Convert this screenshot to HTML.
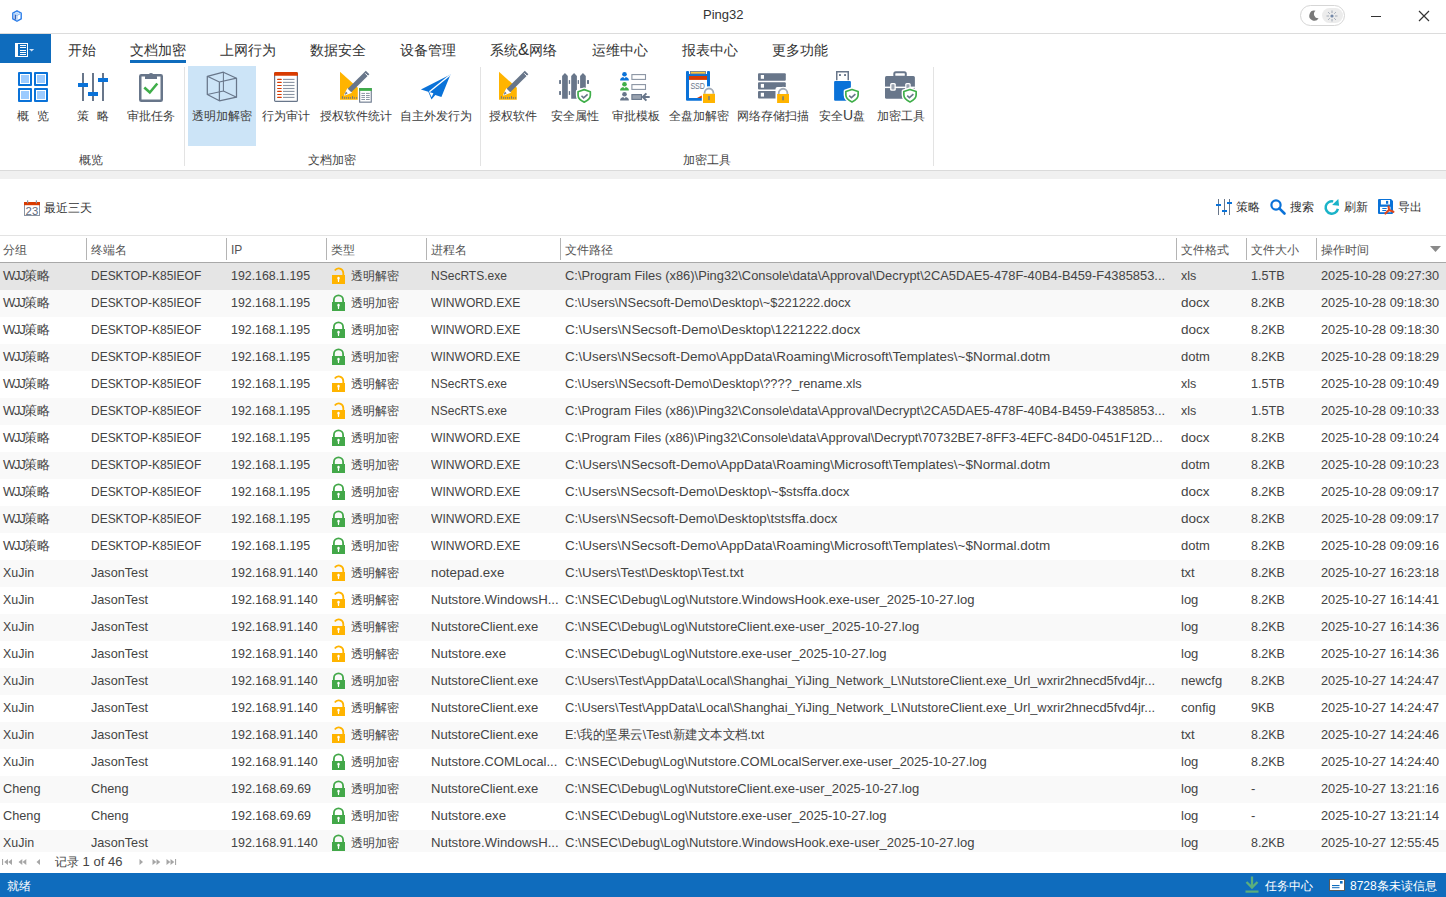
<!DOCTYPE html>
<html><head><meta charset="utf-8"><title>Ping32</title>
<style>
html,body{margin:0;padding:0;width:1446px;height:897px;overflow:hidden;background:#fff;font-family:"Liberation Sans", sans-serif;}
.t{position:absolute;white-space:nowrap;}
.r{position:absolute;}
svg.r{overflow:visible}
</style></head><body>
<div class="r" style="left:0px;top:0px;width:1446px;height:33px;background:#ffffff;"></div><div class="r" style="left:0px;top:33px;width:1446px;height:1px;background:#dcdcdc;"></div><svg class="r" style="left:12px;top:10px" width="10" height="12" viewBox="0 0 10 12"><path d="M5 0.8 L9.2 3.1 V8.9 L5 11.2 L0.8 8.9 V3.1 Z" fill="#fff" stroke="#2b7de9" stroke-width="1.4" stroke-linejoin="round"/><path d="M1 3.2 L5 5.4 L9 3.2" fill="none" stroke="#7fb6f5" stroke-width="1.1"/><path d="M3 2.3 L7 4.3 M2.6 4.3 L6.6 2.2" stroke="#a8cdf8" stroke-width="0.8"/><rect x="2.6" y="5" width="1.5" height="4.6" fill="#3a62b5"/><path d="M5 5.4 V11" stroke="#7fb6f5" stroke-width="0.9"/></svg><div class="t" style="left:703px;top:5px;font-size:13px;line-height:20px;color:#333;">Ping32</div><div class="r" style="left:1300px;top:5px;width:45px;height:21px;background:transparent;border:1px solid #d6d6d6;border-radius:11px;box-sizing:border-box"></div><div class="r" style="left:1322px;top:8px;width:21px;height:15px;background:#ececec;border-radius:8px"></div><svg class="r" style="left:1308px;top:10px" width="11" height="11" viewBox="0 0 11 11"><path d="M7.5 0.8 A5 5 0 1 0 10.6 8.2 A4.2 4.2 0 0 1 7.5 0.8 Z" fill="#7a7a7a"/></svg><svg class="r" style="left:1326px;top:10px" width="12" height="12" viewBox="0 0 12 12"><circle cx="6" cy="6" r="1.6" fill="#7388a8"/><g stroke="#9aa3b0" stroke-width="0.9"><path d="M6 0.5V3M6 9V11.5M0.5 6H3M9 6H11.5M2.1 2.1L3.8 3.8M8.2 8.2L9.9 9.9M2.1 9.9L3.8 8.2M8.2 3.8L9.9 2.1"/></g></svg><div class="r" style="left:1371px;top:16px;width:10px;height:1px;background:#333;"></div><svg class="r" style="left:1418px;top:10px" width="12" height="12" viewBox="0 0 12 12"><path d="M1 1L11 11M11 1L1 11" stroke="#333" stroke-width="1.2"/></svg><div class="r" style="left:0px;top:34px;width:51px;height:29px;background:#0f6cbd;"></div><svg class="r" style="left:15px;top:43px" width="22" height="14" viewBox="0 0 22 14"><rect x="0.5" y="0.5" width="12" height="13" fill="none" stroke="#fff" stroke-width="1"/><rect x="1" y="1" width="2" height="12" fill="#fff"/><g fill="#fff"><rect x="5" y="2" width="6" height="1"/><rect x="5" y="4" width="6" height="1"/><rect x="5" y="7" width="6" height="1"/><rect x="5" y="9" width="6" height="1"/><rect x="5" y="11" width="6" height="1"/></g><path d="M14 6 H19.2 L16.6 8.6 Z" fill="#cfe0f4"/></svg><div class="t" style="left:68px;top:40px;font-size:14px;line-height:20px;color:#333;">开始</div><div class="t" style="left:130px;top:40px;font-size:14px;line-height:20px;color:#333;">文档加密</div><div class="t" style="left:220px;top:40px;font-size:14px;line-height:20px;color:#333;">上网行为</div><div class="t" style="left:310px;top:40px;font-size:14px;line-height:20px;color:#333;">数据安全</div><div class="t" style="left:400px;top:40px;font-size:14px;line-height:20px;color:#333;">设备管理</div><div class="t" style="left:490px;top:40px;font-size:14px;line-height:20px;color:#333;">系统<span style="font-size:16.5px;line-height:14px">&amp;</span>网络</div><div class="t" style="left:592px;top:40px;font-size:14px;line-height:20px;color:#333;">运维中心</div><div class="t" style="left:682px;top:40px;font-size:14px;line-height:20px;color:#333;">报表中心</div><div class="t" style="left:772px;top:40px;font-size:14px;line-height:20px;color:#333;">更多功能</div><div class="r" style="left:130px;top:60px;width:56px;height:3px;background:#0f6cbd;"></div><div class="r" style="left:0px;top:170px;width:1446px;height:1px;background:#dadada;"></div><div class="r" style="left:0px;top:171px;width:1446px;height:8px;background:#f0f0f0;"></div><div class="r" style="left:184px;top:67px;width:1px;height:99px;background:#e3e3e3;"></div><div class="r" style="left:480px;top:67px;width:1px;height:99px;background:#e3e3e3;"></div><div class="r" style="left:933px;top:67px;width:1px;height:99px;background:#e3e3e3;"></div><div class="r" style="left:188px;top:66px;width:68px;height:80px;background:#cce4f7;"></div><svg class="r" style="left:18px;top:72px" width="30" height="30" viewBox="0 0 30 30"><rect x="0" y="0" width="14" height="14" rx="1" fill="#0a72d8"/><rect x="2" y="2" width="10" height="10" fill="#fff"/><rect x="3" y="3" width="8" height="8" fill="#9ccbff"/><rect x="0" y="16" width="14" height="14" rx="1" fill="#0a72d8"/><rect x="2" y="18" width="10" height="10" fill="#fff"/><rect x="3" y="19" width="8" height="8" fill="#9ccbff"/><rect x="16" y="0" width="14" height="14" rx="1" fill="#0a72d8"/><rect x="18" y="2" width="10" height="10" fill="#fff"/><rect x="19" y="3" width="8" height="8" fill="#9ccbff"/><rect x="16" y="16" width="14" height="14" rx="1" fill="#0a72d8"/><rect x="18" y="18" width="10" height="10" fill="#fff"/><rect x="19" y="19" width="8" height="8" fill="#9ccbff"/></svg><svg class="r" style="left:78px;top:72px" width="30" height="30" viewBox="0 0 30 30"><g fill="#68768a"><rect x="4" y="1" width="2" height="28"/><rect x="14" y="1" width="2" height="28"/><rect x="24" y="1" width="2" height="28"/></g><g fill="#0a72d8"><rect x="0" y="11" width="10" height="4"/><rect x="10" y="20" width="10" height="4"/><rect x="20" y="6" width="10" height="4"/></g></svg><svg class="r" style="left:139px;top:71px" width="25" height="31" viewBox="0 0 25 31"><rect x="1.25" y="4.25" width="21.5" height="25.5" rx="1" fill="#fff" stroke="#68768a" stroke-width="2.5"/><path d="M6 8 V5.5 Q6 4 7.5 4 H16.5 Q18 4 18 5.5 V8 Z" fill="#68768a"/><path d="M9.5 4.5 A2.5 2.5 0 0 1 14.5 4.5 Z" fill="#68768a"/><rect x="7" y="6.3" width="10" height="1.7" fill="#68768a"/><path d="M5.3 16.5 L10.8 21.5 L18.3 12.5" fill="none" stroke="#3fae49" stroke-width="2.6"/></svg><svg class="r" style="left:206px;top:71px" width="32" height="32" viewBox="0 0 32 32"><g fill="none" stroke="#68768a" stroke-width="1.25" stroke-linejoin="round"><path d="M1.3 5.3 L17.4 1.2 L30.5 7.2 L30.5 26.2 L13.4 29.8 L1.3 23.5 Z M1.3 5.3 L13.4 11 L30.5 7.2 M13.4 11 V29.8"/><path d="M17.4 1.2 V20.1 L1.3 23.5 M17.4 20.1 L30.5 26.2" stroke-width="1.05"/></g></svg><svg class="r" style="left:274px;top:72px" width="24" height="30" viewBox="0 0 24 30"><rect x="0.6" y="0.6" width="22.8" height="28.8" rx="1" fill="#fff" stroke="#68768a" stroke-width="1.2"/><path d="M0 3.8 V1.5 Q0 0 1.5 0 H22.5 Q24 0 24 1.5 V3.8 Z" fill="#d83b01"/><rect x="3.1" y="6.800000000000001" width="4.7" height="1.2" rx="0.6" fill="#d83b01"/><rect x="9" y="6.8500000000000005" width="11.5" height="1.1" fill="#8a94a3"/><rect x="3.1" y="9.8" width="4.7" height="1.2" rx="0.6" fill="#d83b01"/><rect x="9" y="9.85" width="11.5" height="1.1" fill="#8a94a3"/><rect x="3.1" y="12.9" width="4.7" height="1.2" rx="0.6" fill="#d83b01"/><rect x="9" y="12.95" width="11.5" height="1.1" fill="#8a94a3"/><rect x="3.1" y="15.9" width="4.7" height="1.2" rx="0.6" fill="#d83b01"/><rect x="9" y="15.95" width="11.5" height="1.1" fill="#8a94a3"/><rect x="3.1" y="18.799999999999997" width="4.7" height="1.2" rx="0.6" fill="#d83b01"/><rect x="9" y="18.849999999999998" width="11.5" height="1.1" fill="#8a94a3"/><rect x="3.1" y="21.9" width="4.7" height="1.2" rx="0.6" fill="#d83b01"/><rect x="9" y="21.95" width="11.5" height="1.1" fill="#8a94a3"/><rect x="3.1" y="24.799999999999997" width="4.7" height="1.2" rx="0.6" fill="#d83b01"/><rect x="9" y="24.849999999999998" width="11.5" height="1.1" fill="#8a94a3"/></svg><svg class="r" style="left:340px;top:71px" width="33" height="32" viewBox="0 0 33 32"><path d="M0 0.8 L17.8 16.7 V28.8 H0 Z" fill="#ffb400"/><rect x="1.9" y="25.2" width="1" height="2.5" fill="#68768a"/><rect x="4.0" y="26.2" width="1" height="1.5" fill="#68768a"/><rect x="5.9" y="26.2" width="1" height="1.5" fill="#68768a"/><rect x="8.0" y="26.2" width="1" height="1.5" fill="#68768a"/><rect x="9.9" y="26.2" width="1" height="1.5" fill="#68768a"/><rect x="12.0" y="25.2" width="1" height="2.5" fill="#68768a"/><rect x="13.9" y="26.2" width="1" height="1.5" fill="#68768a"/><rect x="16.1" y="26.2" width="1" height="1.5" fill="#68768a"/><path d="M7.73 17.83 L11.27 21.37 L4.6 23.9 Z" fill="#fff" stroke="#fff" stroke-width="1.2" stroke-linejoin="round"/><path d="M5.9 20.5 L7.6 22.2 L4.6 23.9 Z" fill="#68768a"/><path d="M27.6 1.4 L9.5 19.6" stroke="#68768a" stroke-width="5"/><path d="M25.2 2.3 L28.7 5.8" stroke="#fff" stroke-width="1"/><rect x="19.65" y="17.6" width="11.6" height="13.55" fill="#fff" stroke="#68768a" stroke-width="1.1"/><rect x="19.1" y="17.1" width="12.7" height="2.8" fill="#3fae49"/><rect x="21.4" y="21.9" width="3.6" height="1" fill="#8a94a3"/><rect x="26" y="21.9" width="3.7" height="1" fill="#8a94a3"/><rect x="21.4" y="24.0" width="3.6" height="1" fill="#8a94a3"/><rect x="26" y="24.0" width="3.7" height="1" fill="#8a94a3"/><rect x="21.4" y="25.9" width="3.6" height="1" fill="#8a94a3"/><rect x="26" y="25.9" width="3.7" height="1" fill="#8a94a3"/><rect x="21.4" y="28.0" width="3.6" height="1" fill="#8a94a3"/><rect x="26" y="28.0" width="3.7" height="1" fill="#8a94a3"/></svg><svg class="r" style="left:420px;top:73px" width="32" height="28" viewBox="0 0 32 28"><path d="M30.5 1.4 L0.9 16.4 L8.3 18.7 L11.5 26.6 L15.3 21.9 L21.4 24 Z" fill="#0a72d8"/><path d="M9.4 18.8 L29.8 2.3" stroke="#fff" stroke-width="1.4"/><path d="M9.2 19 L11.6 24.2 L13.4 20.2 Z" fill="#fff"/></svg><svg class="r" style="left:499px;top:71px" width="32" height="32" viewBox="0 0 32 32"><path d="M0 0.8 L17.8 16.7 V28.8 H0 Z" fill="#ffb400"/><rect x="1.9" y="25.2" width="1" height="2.5" fill="#68768a"/><rect x="4.0" y="26.2" width="1" height="1.5" fill="#68768a"/><rect x="5.9" y="26.2" width="1" height="1.5" fill="#68768a"/><rect x="8.0" y="26.2" width="1" height="1.5" fill="#68768a"/><rect x="9.9" y="26.2" width="1" height="1.5" fill="#68768a"/><rect x="12.0" y="25.2" width="1" height="2.5" fill="#68768a"/><rect x="13.9" y="26.2" width="1" height="1.5" fill="#68768a"/><rect x="16.1" y="26.2" width="1" height="1.5" fill="#68768a"/><path d="M7.73 17.83 L11.27 21.37 L4.6 23.9 Z" fill="#fff" stroke="#fff" stroke-width="1.2" stroke-linejoin="round"/><path d="M5.9 20.5 L7.6 22.2 L4.6 23.9 Z" fill="#68768a"/><path d="M27.6 1.4 L9.5 19.6" stroke="#68768a" stroke-width="5"/><path d="M25.2 2.3 L28.7 5.8" stroke="#fff" stroke-width="1"/></svg><svg class="r" style="left:559px;top:73px" width="33" height="31" viewBox="0 0 33 31"><g fill="#68768a"><path d="M3.1 3.1 L5.95 0.1 L8.8 3.1 V25.7 H3.1 Z"/><path d="M12.2 3.1 L15.049999999999999 0.1 L17.9 3.1 V25.7 H12.2 Z"/><path d="M21.1 3.1 L23.950000000000003 0.1 L26.8 3.1 V15.3 H21.1 Z"/><rect x="0.1" y="7.1" width="1.9" height="3.8"/><rect x="0.1" y="18.1" width="1.9" height="3.8"/><rect x="9.8" y="7.1" width="1.299999999999999" height="3.8"/><rect x="9.8" y="18.1" width="1.299999999999999" height="3.8"/><rect x="18.7" y="7.1" width="1.3000000000000007" height="3.8"/><rect x="18.7" y="18.1" width="1.3000000000000007" height="3.8"/><rect x="28" y="7.1" width="2" height="3.8"/></g><path d="M25.2 16.2 L31.799999999999997 18.4 V22.2 C31.799999999999997 26.0 28.4 28.2 25.2 29.6 C22.0 28.2 18.6 26.0 18.6 22.2 V18.4 Z" fill="#fff" stroke="#fff" stroke-width="3.5" stroke-linejoin="round"/><path d="M25.2 16.2 L31.799999999999997 18.4 V22.2 C31.799999999999997 26.0 28.4 28.2 25.2 29.6 C22.0 28.2 18.6 26.0 18.6 22.2 V18.4 Z" fill="#fff" stroke="#3fae49" stroke-width="1.8" stroke-linejoin="round" transform="translate(25.2 22.9) scale(0.93) translate(-25.2 -22.9)"/><path d="M22.45 22.799999999999997 L24.599999999999998 24.9 L28.599999999999998 21.299999999999997" fill="none" stroke="#68768a" stroke-width="1.6"/></svg><svg class="r" style="left:620px;top:72px" width="31" height="30" viewBox="0 0 31 30"><circle cx="4.5" cy="2.2" r="2.3" fill="#0a72d8"/><path d="M0.09999999999999964 8.6 C0.09999999999999964 5.6 2.5 5 4.5 5 C6.5 5 8.9 5.6 8.9 8.6 Z" fill="#0a72d8"/><path d="M3.3 5 L4.5 6.6 L5.7 5 Z" fill="#fff"/><circle cx="4.5" cy="12.2" r="2.3" fill="#3fae49"/><path d="M0.09999999999999964 18.6 C0.09999999999999964 15.6 2.5 15 4.5 15 C6.5 15 8.9 15.6 8.9 18.6 Z" fill="#3fae49"/><path d="M3.3 15 L4.5 16.6 L5.7 15 Z" fill="#fff"/><circle cx="4.5" cy="22.2" r="2.3" fill="#68768a"/><path d="M0.09999999999999964 28.6 C0.09999999999999964 25.6 2.5 25 4.5 25 C6.5 25 8.9 25.6 8.9 28.6 Z" fill="#68768a"/><path d="M3.3 25 L4.5 26.6 L5.7 25 Z" fill="#fff"/><g fill="none" stroke="#8a94a3" stroke-width="1.1"><rect x="11.9" y="2.6" width="13.6" height="4.8"/><rect x="11.9" y="12.6" width="13.6" height="4.8"/></g><rect x="11.9" y="22.6" width="9.6" height="4.8" fill="#9aa3b0" stroke="#68768a" stroke-width="1.1"/><path d="M29.7 25 H23 M26.4 21.4 L22.8 25 L26.4 28.6" fill="none" stroke="#68768a" stroke-width="2"/></svg><svg class="r" style="left:686px;top:71px" width="33" height="33" viewBox="0 0 33 33"><path d="M1 0 H2 Q3 0 3 1 V2.9 H21 V1 Q21 0 22 0 H23 Q24 0 24 1 V15.6 H21 V5 H3 V27 H15.8 V29.8 H1 Q0 29.8 0 28.8 V1 Q0 0 1 0 Z" fill="#0a72d8"/><rect x="4.5" y="0.4" width="15" height="2.5" fill="#ffc83d" stroke="#68768a" stroke-width="0.8"/><rect x="3" y="5" width="18" height="3.9" fill="#d83b01"/><text x="4.4" y="18" font-family="Liberation Sans" font-size="8.4" fill="#68768a" textLength="14.6" lengthAdjust="spacingAndGlyphs">SSD</text><path d="M11 27 L15.8 27 L15.8 24.5 Z" fill="#d83b01"/><path d="M18.6 22.8 V21.900000000000002 A4.4 4.4 0 0 1 27.4 21.900000000000002 V22.8" fill="none" stroke="#fff" stroke-width="4"/><path d="M18.6 22.8 V21.900000000000002 A4.4 4.4 0 0 1 27.4 21.900000000000002 V22.8" fill="none" stroke="#a3acb8" stroke-width="1.8"/><rect x="17" y="22.8" width="12" height="9.2" fill="#ffb400"/><rect x="22.3" y="25.1" width="1.4" height="4" fill="#68768a"/></svg><svg class="r" style="left:758px;top:73px" width="32" height="31" viewBox="0 0 32 31"><rect x="0" y="0.3" width="27.8" height="7.4" rx="1" fill="#68768a"/><rect x="2.8" y="2.0" width="3.2" height="3.8" fill="#fff"/><rect x="0" y="9.2" width="27.8" height="7.4" rx="1" fill="#68768a"/><rect x="2.8" y="10.899999999999999" width="3.2" height="3.8" fill="#fff"/><rect x="0" y="18.1" width="27.8" height="7.4" rx="1" fill="#68768a"/><rect x="2.8" y="19.8" width="3.2" height="3.8" fill="#fff"/><rect x="17.5" y="14" width="14" height="17" fill="#fff" rx="2"/><path d="M20.700000000000003 21.0 V20.1 A4.35 4.35 0 0 1 29.4 20.1 V21.0" fill="none" stroke="#fff" stroke-width="4"/><path d="M20.700000000000003 21.0 V20.1 A4.35 4.35 0 0 1 29.4 20.1 V21.0" fill="none" stroke="#a3acb8" stroke-width="1.8"/><rect x="19.1" y="21.0" width="11.9" height="9" fill="#ffb400"/><rect x="24.35" y="23.3" width="1.4" height="4" fill="#68768a"/></svg><svg class="r" style="left:834px;top:71px" width="26" height="33" viewBox="0 0 26 33"><path d="M2.75 9.3 V0.75 H14.25 V9.3" fill="none" stroke="#68768a" stroke-width="1.5"/><rect x="5" y="3.1" width="1.9" height="1.9" fill="#68768a"/><rect x="10.1" y="3.1" width="1.9" height="1.9" fill="#68768a"/><rect x="0.1" y="9.9" width="16.8" height="19.9" rx="1" fill="#0a72d8"/><path d="M18 18 L24.6 20.2 V24 C24.6 27.8 21.2 30 18 31.4 C14.8 30 11.4 27.8 11.4 24 V20.2 Z" fill="#fff" stroke="#fff" stroke-width="3.5" stroke-linejoin="round"/><path d="M18 18 L24.6 20.2 V24 C24.6 27.8 21.2 30 18 31.4 C14.8 30 11.4 27.8 11.4 24 V20.2 Z" fill="#fff" stroke="#3fae49" stroke-width="1.8" stroke-linejoin="round" transform="translate(18 24.7) scale(0.93) translate(-18 -24.7)"/><path d="M15.25 24.6 L17.4 26.7 L21.4 23.1" fill="none" stroke="#68768a" stroke-width="1.6"/></svg><svg class="r" style="left:885px;top:71px" width="33" height="33" viewBox="0 0 33 33"><rect x="9.3" y="1.2" width="11.5" height="4.6" rx="1.5" fill="none" stroke="#68768a" stroke-width="2"/><rect x="0" y="5" width="29.9" height="22.7" rx="1.5" fill="#68768a"/><rect x="0" y="15.6" width="29.9" height="1.5" fill="#fff"/><rect x="5.1" y="12" width="5.7" height="7.7" rx="1.5" fill="#fff"/><rect x="6.4" y="13.3" width="3.1" height="5.1" rx="0.6" fill="#9aa3b0"/><rect x="20.2" y="12" width="5.5" height="7.7" rx="1.5" fill="#fff"/><rect x="21.4" y="13.3" width="3.1" height="5.1" rx="0.6" fill="#9aa3b0"/><path d="M25 18 L31.6 20.2 V24 C31.6 27.8 28.2 30 25 31.4 C21.8 30 18.4 27.8 18.4 24 V20.2 Z" fill="#fff" stroke="#fff" stroke-width="3.5" stroke-linejoin="round"/><path d="M25 18 L31.6 20.2 V24 C31.6 27.8 28.2 30 25 31.4 C21.8 30 18.4 27.8 18.4 24 V20.2 Z" fill="#fff" stroke="#3fae49" stroke-width="1.8" stroke-linejoin="round" transform="translate(25 24.7) scale(0.93) translate(-25 -24.7)"/><path d="M22.25 24.6 L24.4 26.7 L28.4 23.1" fill="none" stroke="#68768a" stroke-width="1.6"/></svg><div class="t" style="left:-17.0px;width:100px;text-align:center;top:106px;font-size:12px;line-height:20px;color:#3c3c3c;">概<span style="margin-left:8px">览</span></div><div class="t" style="left:43.0px;width:100px;text-align:center;top:106px;font-size:12px;line-height:20px;color:#3c3c3c;">策<span style="margin-left:8px">略</span></div><div class="t" style="left:101.0px;width:100px;text-align:center;top:106px;font-size:12px;line-height:20px;color:#3c3c3c;">审批任务</div><div class="t" style="left:172.0px;width:100px;text-align:center;top:106px;font-size:12px;line-height:20px;color:#3c3c3c;">透明加解密</div><div class="t" style="left:236.0px;width:100px;text-align:center;top:106px;font-size:12px;line-height:20px;color:#3c3c3c;">行为审计</div><div class="t" style="left:306.0px;width:100px;text-align:center;top:106px;font-size:12px;line-height:20px;color:#3c3c3c;">授权软件统计</div><div class="t" style="left:386.0px;width:100px;text-align:center;top:106px;font-size:12px;line-height:20px;color:#3c3c3c;">自主外发行为</div><div class="t" style="left:463.0px;width:100px;text-align:center;top:106px;font-size:12px;line-height:20px;color:#3c3c3c;">授权软件</div><div class="t" style="left:525.0px;width:100px;text-align:center;top:106px;font-size:12px;line-height:20px;color:#3c3c3c;">安全属性</div><div class="t" style="left:585.5px;width:100px;text-align:center;top:106px;font-size:12px;line-height:20px;color:#3c3c3c;">审批模板</div><div class="t" style="left:649.0px;width:100px;text-align:center;top:106px;font-size:12px;line-height:20px;color:#3c3c3c;">全盘加解密</div><div class="t" style="left:722.7px;width:100px;text-align:center;top:106px;font-size:12px;line-height:20px;color:#3c3c3c;">网络存储扫描</div><div class="t" style="left:792.0px;width:100px;text-align:center;top:106px;font-size:12px;line-height:20px;color:#3c3c3c;">安全<span style="font-size:14px;line-height:12px">U</span>盘</div><div class="t" style="left:850.7px;width:100px;text-align:center;top:106px;font-size:12px;line-height:20px;color:#3c3c3c;">加密工具</div><div class="t" style="left:41.0px;width:100px;text-align:center;top:150px;font-size:12px;line-height:20px;color:#444;">概览</div><div class="t" style="left:282.0px;width:100px;text-align:center;top:150px;font-size:12px;line-height:20px;color:#444;">文档加密</div><div class="t" style="left:656.5px;width:100px;text-align:center;top:150px;font-size:12px;line-height:20px;color:#444;">加密工具</div><div class="r" style="left:0px;top:179px;width:1446px;height:56px;background:#ffffff;"></div><svg class="r" style="left:24px;top:200px" width="16" height="16" viewBox="0 0 16 16"><rect x="0.5" y="2.5" width="15" height="13" fill="#fff" stroke="#8a94a3" stroke-width="1"/><rect x="0" y="2" width="16" height="3.2" fill="#d83b01"/><rect x="3" y="0.3" width="1.2" height="3" fill="#8a94a3"/><rect x="11.8" y="0.3" width="1.2" height="3" fill="#8a94a3"/><text x="1.6" y="14.5" font-family="Liberation Sans" font-size="10.5" fill="#5f6b7d" textLength="12.6" lengthAdjust="spacingAndGlyphs">23</text></svg><div class="t" style="left:44px;top:198px;font-size:12px;line-height:20px;color:#333;">最近三天</div><svg class="r" style="left:1216px;top:199px" width="16" height="16" viewBox="0 0 16 16"><g fill="#68768a"><rect x="2" y="0" width="1" height="16"/><rect x="8" y="0" width="1" height="16"/><rect x="13" y="0" width="1" height="16"/></g><g fill="#0a72d8"><rect x="0" y="5" width="5" height="2"/><rect x="6" y="11" width="5" height="2"/><rect x="11" y="3" width="5" height="2"/></g></svg><div class="t" style="left:1236px;top:197px;font-size:12px;line-height:20px;color:#333;">策略</div><svg class="r" style="left:1270px;top:199px" width="16" height="16" viewBox="0 0 16 16"><circle cx="6" cy="6" r="4.6" fill="none" stroke="#0a72d8" stroke-width="2.2"/><path d="M9.3 9.3 L14.5 14.5" stroke="#0a72d8" stroke-width="2.6" stroke-linecap="round"/></svg><div class="t" style="left:1290px;top:197px;font-size:12px;line-height:20px;color:#333;">搜索</div><svg class="r" style="left:1324px;top:199px" width="16" height="16" viewBox="0 0 16 16"><path d="M13.9 9.9 A6.2 6.2 0 1 1 9.2 2.4" fill="none" stroke="#1ab3c8" stroke-width="2.5"/><path d="M8.1 6 L14.3 -0.1 L15.1 6.8 Z" fill="#1ab3c8"/></svg><div class="t" style="left:1344px;top:197px;font-size:12px;line-height:20px;color:#333;">刷新</div><svg class="r" style="left:1378px;top:199px" width="16" height="16" viewBox="0 0 16 16"><path d="M0 1 Q0 0 1 0 H13 L15 2 V14 Q15 15 14 15 H1 Q0 15 0 14 Z" fill="#0a72d8"/><rect x="2.9" y="1" width="9.1" height="4.5" fill="#fff"/><rect x="2" y="7.8" width="10.5" height="5.4" fill="#fff"/><rect x="12" y="11" width="1" height="2.2" fill="#fff"/><rect x="8" y="1.9" width="2.2" height="2.9" fill="#0a72d8"/><rect x="4.3" y="9" width="4.4" height="1" fill="#0a72d8"/><rect x="4.3" y="11" width="4" height="1" fill="#0a72d8"/><path d="M10.6 7.6 L11 11 L7.4 14.6 M11 11 L15.4 12.8" fill="none" stroke="#e0461a" stroke-width="2.1" stroke-linecap="round" stroke-linejoin="round"/></svg><div class="t" style="left:1398px;top:197px;font-size:12px;line-height:20px;color:#333;">导出</div><div class="r" style="left:0px;top:235px;width:1446px;height:1px;background:#e3e3e3;"></div><div class="r" style="left:0px;top:236px;width:1446px;height:26px;background:#ffffff;"></div><div class="r" style="left:0px;top:262px;width:1446px;height:1px;background:#a8a8a8;"></div><div class="t" style="left:3px;top:240px;font-size:12px;line-height:20px;color:#555;">分组</div><div class="r" style="left:86px;top:238px;width:1px;height:22px;background:#b4b4b4;"></div><div class="t" style="left:91px;top:240px;font-size:12px;line-height:20px;color:#555;">终端名</div><div class="r" style="left:226px;top:238px;width:1px;height:22px;background:#b4b4b4;"></div><div class="t" style="left:231px;top:240px;font-size:12px;line-height:20px;color:#555;">IP</div><div class="r" style="left:326px;top:238px;width:1px;height:22px;background:#b4b4b4;"></div><div class="t" style="left:331px;top:240px;font-size:12px;line-height:20px;color:#555;">类型</div><div class="r" style="left:426px;top:238px;width:1px;height:22px;background:#b4b4b4;"></div><div class="t" style="left:431px;top:240px;font-size:12px;line-height:20px;color:#555;">进程名</div><div class="r" style="left:560px;top:238px;width:1px;height:22px;background:#b4b4b4;"></div><div class="t" style="left:565px;top:240px;font-size:12px;line-height:20px;color:#555;">文件路径</div><div class="r" style="left:1176px;top:238px;width:1px;height:22px;background:#b4b4b4;"></div><div class="t" style="left:1181px;top:240px;font-size:12px;line-height:20px;color:#555;">文件格式</div><div class="r" style="left:1246px;top:238px;width:1px;height:22px;background:#b4b4b4;"></div><div class="t" style="left:1251px;top:240px;font-size:12px;line-height:20px;color:#555;">文件大小</div><div class="r" style="left:1316px;top:238px;width:1px;height:22px;background:#b4b4b4;"></div><div class="t" style="left:1321px;top:240px;font-size:12px;line-height:20px;color:#555;">操作时间</div><svg class="r" style="left:1430px;top:246px" width="11" height="6" viewBox="0 0 11 6"><path d="M0 0 H11 L5.5 6 Z" fill="#8a8a8a"/></svg><div class="r" style="left:0;top:263px;width:1446px;height:589px;overflow:hidden"><div class="r" style="left:0px;top:0px;width:1446px;height:27px;background:#e5e5e5;"></div><div class="t" style="left:3px;top:3px;font-size:13px;line-height:20px;color:#444444;"><span style="letter-spacing:-1.3px">WJJ</span>策略</div><div class="t" style="left:91px;top:3px;font-size:13px;line-height:20px;color:#444444;transform:scaleX(0.921);transform-origin:0 0;">DESKTOP-K85IEOF</div><div class="t" style="left:231px;top:3px;font-size:13px;line-height:20px;color:#444444;transform:scaleX(0.951);transform-origin:0 0;">192.168.1.195</div><svg class="r" style="left:332px;top:5px" width="13" height="16" viewBox="0 0 13 16"><path d="M2.8 2.56 A4.6 4.6 0 0 1 11.3 5 V7.5" fill="none" stroke="#ffb400" stroke-width="1.8"/><rect x="0" y="7" width="13" height="9" fill="#ffb400"/><circle cx="6.5" cy="9.9" r="1.2" fill="#fff"/><path d="M5.6 10 H7.4 L7 14 H6 Z" fill="#fff"/></svg><div class="t" style="left:351px;top:3px;font-size:12px;line-height:20px;color:#444444;">透明解密</div><div class="t" style="left:431px;top:3px;font-size:13px;line-height:20px;color:#444444;transform:scaleX(0.925);transform-origin:0 0;">NSecRTS.exe</div><div class="t" style="left:565px;top:3px;font-size:13px;line-height:20px;color:#444444;transform:scaleX(0.991);transform-origin:0 0;">C:\Program Files (x86)\Ping32\Console\data\Approval\Decrypt\2CA5DAE5-478F-40B4-B459-F4385853...</div><div class="t" style="left:1181px;top:3px;font-size:13px;line-height:20px;color:#444444;transform:scaleX(0.96);transform-origin:0 0;">xls</div><div class="t" style="left:1251px;top:3px;font-size:13px;line-height:20px;color:#444444;transform:scaleX(0.972);transform-origin:0 0;">1.5TB</div><div class="t" style="left:1321px;top:3px;font-size:13px;line-height:20px;color:#444444;transform:scaleX(0.979);transform-origin:0 0;">2025-10-28 09:27:30</div><div class="r" style="left:0px;top:27px;width:1446px;height:27px;background:#f9f9f9;"></div><div class="t" style="left:3px;top:30px;font-size:13px;line-height:20px;color:#444444;"><span style="letter-spacing:-1.3px">WJJ</span>策略</div><div class="t" style="left:91px;top:30px;font-size:13px;line-height:20px;color:#444444;transform:scaleX(0.921);transform-origin:0 0;">DESKTOP-K85IEOF</div><div class="t" style="left:231px;top:30px;font-size:13px;line-height:20px;color:#444444;transform:scaleX(0.951);transform-origin:0 0;">192.168.1.195</div><svg class="r" style="left:332px;top:32px" width="13" height="16" viewBox="0 0 13 16"><path d="M1.9 7.5 V5 A4.6 4.6 0 0 1 11.1 5 V7.5" fill="none" stroke="#43a849" stroke-width="1.8"/><rect x="0" y="7" width="13" height="9" fill="#43a849"/><circle cx="6.5" cy="9.9" r="1.2" fill="#fff"/><path d="M5.6 10 H7.4 L7 14 H6 Z" fill="#fff"/></svg><div class="t" style="left:351px;top:30px;font-size:12px;line-height:20px;color:#444444;">透明加密</div><div class="t" style="left:431px;top:30px;font-size:13px;line-height:20px;color:#444444;transform:scaleX(0.931);transform-origin:0 0;">WINWORD.EXE</div><div class="t" style="left:565px;top:30px;font-size:13px;line-height:20px;color:#444444;transform:scaleX(0.985);transform-origin:0 0;">C:\Users\NSecsoft-Demo\Desktop\~$221222.docx</div><div class="t" style="left:1181px;top:30px;font-size:13px;line-height:20px;color:#444444;transform:scaleX(1.04);transform-origin:0 0;">docx</div><div class="t" style="left:1251px;top:30px;font-size:13px;line-height:20px;color:#444444;transform:scaleX(0.956);transform-origin:0 0;">8.2KB</div><div class="t" style="left:1321px;top:30px;font-size:13px;line-height:20px;color:#444444;transform:scaleX(0.979);transform-origin:0 0;">2025-10-28 09:18:30</div><div class="r" style="left:0px;top:54px;width:1446px;height:27px;background:#ffffff;"></div><div class="t" style="left:3px;top:57px;font-size:13px;line-height:20px;color:#444444;"><span style="letter-spacing:-1.3px">WJJ</span>策略</div><div class="t" style="left:91px;top:57px;font-size:13px;line-height:20px;color:#444444;transform:scaleX(0.921);transform-origin:0 0;">DESKTOP-K85IEOF</div><div class="t" style="left:231px;top:57px;font-size:13px;line-height:20px;color:#444444;transform:scaleX(0.951);transform-origin:0 0;">192.168.1.195</div><svg class="r" style="left:332px;top:59px" width="13" height="16" viewBox="0 0 13 16"><path d="M1.9 7.5 V5 A4.6 4.6 0 0 1 11.1 5 V7.5" fill="none" stroke="#43a849" stroke-width="1.8"/><rect x="0" y="7" width="13" height="9" fill="#43a849"/><circle cx="6.5" cy="9.9" r="1.2" fill="#fff"/><path d="M5.6 10 H7.4 L7 14 H6 Z" fill="#fff"/></svg><div class="t" style="left:351px;top:57px;font-size:12px;line-height:20px;color:#444444;">透明加密</div><div class="t" style="left:431px;top:57px;font-size:13px;line-height:20px;color:#444444;transform:scaleX(0.931);transform-origin:0 0;">WINWORD.EXE</div><div class="t" style="left:565px;top:57px;font-size:13px;line-height:20px;color:#444444;transform:scaleX(1.045);transform-origin:0 0;">C:\Users\NSecsoft-Demo\Desktop\1221222.docx</div><div class="t" style="left:1181px;top:57px;font-size:13px;line-height:20px;color:#444444;transform:scaleX(1.04);transform-origin:0 0;">docx</div><div class="t" style="left:1251px;top:57px;font-size:13px;line-height:20px;color:#444444;transform:scaleX(0.956);transform-origin:0 0;">8.2KB</div><div class="t" style="left:1321px;top:57px;font-size:13px;line-height:20px;color:#444444;transform:scaleX(0.979);transform-origin:0 0;">2025-10-28 09:18:30</div><div class="r" style="left:0px;top:81px;width:1446px;height:27px;background:#f9f9f9;"></div><div class="t" style="left:3px;top:84px;font-size:13px;line-height:20px;color:#444444;"><span style="letter-spacing:-1.3px">WJJ</span>策略</div><div class="t" style="left:91px;top:84px;font-size:13px;line-height:20px;color:#444444;transform:scaleX(0.921);transform-origin:0 0;">DESKTOP-K85IEOF</div><div class="t" style="left:231px;top:84px;font-size:13px;line-height:20px;color:#444444;transform:scaleX(0.951);transform-origin:0 0;">192.168.1.195</div><svg class="r" style="left:332px;top:86px" width="13" height="16" viewBox="0 0 13 16"><path d="M1.9 7.5 V5 A4.6 4.6 0 0 1 11.1 5 V7.5" fill="none" stroke="#43a849" stroke-width="1.8"/><rect x="0" y="7" width="13" height="9" fill="#43a849"/><circle cx="6.5" cy="9.9" r="1.2" fill="#fff"/><path d="M5.6 10 H7.4 L7 14 H6 Z" fill="#fff"/></svg><div class="t" style="left:351px;top:84px;font-size:12px;line-height:20px;color:#444444;">透明加密</div><div class="t" style="left:431px;top:84px;font-size:13px;line-height:20px;color:#444444;transform:scaleX(0.931);transform-origin:0 0;">WINWORD.EXE</div><div class="t" style="left:565px;top:84px;font-size:13px;line-height:20px;color:#444444;transform:scaleX(1.037);transform-origin:0 0;">C:\Users\NSecsoft-Demo\AppData\Roaming\Microsoft\Templates\~$Normal.dotm</div><div class="t" style="left:1181px;top:84px;font-size:13px;line-height:20px;color:#444444;">dotm</div><div class="t" style="left:1251px;top:84px;font-size:13px;line-height:20px;color:#444444;transform:scaleX(0.956);transform-origin:0 0;">8.2KB</div><div class="t" style="left:1321px;top:84px;font-size:13px;line-height:20px;color:#444444;transform:scaleX(0.979);transform-origin:0 0;">2025-10-28 09:18:29</div><div class="r" style="left:0px;top:108px;width:1446px;height:27px;background:#ffffff;"></div><div class="t" style="left:3px;top:111px;font-size:13px;line-height:20px;color:#444444;"><span style="letter-spacing:-1.3px">WJJ</span>策略</div><div class="t" style="left:91px;top:111px;font-size:13px;line-height:20px;color:#444444;transform:scaleX(0.921);transform-origin:0 0;">DESKTOP-K85IEOF</div><div class="t" style="left:231px;top:111px;font-size:13px;line-height:20px;color:#444444;transform:scaleX(0.951);transform-origin:0 0;">192.168.1.195</div><svg class="r" style="left:332px;top:113px" width="13" height="16" viewBox="0 0 13 16"><path d="M2.8 2.56 A4.6 4.6 0 0 1 11.3 5 V7.5" fill="none" stroke="#ffb400" stroke-width="1.8"/><rect x="0" y="7" width="13" height="9" fill="#ffb400"/><circle cx="6.5" cy="9.9" r="1.2" fill="#fff"/><path d="M5.6 10 H7.4 L7 14 H6 Z" fill="#fff"/></svg><div class="t" style="left:351px;top:111px;font-size:12px;line-height:20px;color:#444444;">透明解密</div><div class="t" style="left:431px;top:111px;font-size:13px;line-height:20px;color:#444444;transform:scaleX(0.925);transform-origin:0 0;">NSecRTS.exe</div><div class="t" style="left:565px;top:111px;font-size:13px;line-height:20px;color:#444444;transform:scaleX(0.987);transform-origin:0 0;">C:\Users\NSecsoft-Demo\Desktop\????_rename.xls</div><div class="t" style="left:1181px;top:111px;font-size:13px;line-height:20px;color:#444444;transform:scaleX(0.96);transform-origin:0 0;">xls</div><div class="t" style="left:1251px;top:111px;font-size:13px;line-height:20px;color:#444444;transform:scaleX(0.972);transform-origin:0 0;">1.5TB</div><div class="t" style="left:1321px;top:111px;font-size:13px;line-height:20px;color:#444444;transform:scaleX(0.979);transform-origin:0 0;">2025-10-28 09:10:49</div><div class="r" style="left:0px;top:135px;width:1446px;height:27px;background:#f9f9f9;"></div><div class="t" style="left:3px;top:138px;font-size:13px;line-height:20px;color:#444444;"><span style="letter-spacing:-1.3px">WJJ</span>策略</div><div class="t" style="left:91px;top:138px;font-size:13px;line-height:20px;color:#444444;transform:scaleX(0.921);transform-origin:0 0;">DESKTOP-K85IEOF</div><div class="t" style="left:231px;top:138px;font-size:13px;line-height:20px;color:#444444;transform:scaleX(0.951);transform-origin:0 0;">192.168.1.195</div><svg class="r" style="left:332px;top:140px" width="13" height="16" viewBox="0 0 13 16"><path d="M2.8 2.56 A4.6 4.6 0 0 1 11.3 5 V7.5" fill="none" stroke="#ffb400" stroke-width="1.8"/><rect x="0" y="7" width="13" height="9" fill="#ffb400"/><circle cx="6.5" cy="9.9" r="1.2" fill="#fff"/><path d="M5.6 10 H7.4 L7 14 H6 Z" fill="#fff"/></svg><div class="t" style="left:351px;top:138px;font-size:12px;line-height:20px;color:#444444;">透明解密</div><div class="t" style="left:431px;top:138px;font-size:13px;line-height:20px;color:#444444;transform:scaleX(0.925);transform-origin:0 0;">NSecRTS.exe</div><div class="t" style="left:565px;top:138px;font-size:13px;line-height:20px;color:#444444;transform:scaleX(0.991);transform-origin:0 0;">C:\Program Files (x86)\Ping32\Console\data\Approval\Decrypt\2CA5DAE5-478F-40B4-B459-F4385853...</div><div class="t" style="left:1181px;top:138px;font-size:13px;line-height:20px;color:#444444;transform:scaleX(0.96);transform-origin:0 0;">xls</div><div class="t" style="left:1251px;top:138px;font-size:13px;line-height:20px;color:#444444;transform:scaleX(0.972);transform-origin:0 0;">1.5TB</div><div class="t" style="left:1321px;top:138px;font-size:13px;line-height:20px;color:#444444;transform:scaleX(0.979);transform-origin:0 0;">2025-10-28 09:10:33</div><div class="r" style="left:0px;top:162px;width:1446px;height:27px;background:#ffffff;"></div><div class="t" style="left:3px;top:165px;font-size:13px;line-height:20px;color:#444444;"><span style="letter-spacing:-1.3px">WJJ</span>策略</div><div class="t" style="left:91px;top:165px;font-size:13px;line-height:20px;color:#444444;transform:scaleX(0.921);transform-origin:0 0;">DESKTOP-K85IEOF</div><div class="t" style="left:231px;top:165px;font-size:13px;line-height:20px;color:#444444;transform:scaleX(0.951);transform-origin:0 0;">192.168.1.195</div><svg class="r" style="left:332px;top:167px" width="13" height="16" viewBox="0 0 13 16"><path d="M1.9 7.5 V5 A4.6 4.6 0 0 1 11.1 5 V7.5" fill="none" stroke="#43a849" stroke-width="1.8"/><rect x="0" y="7" width="13" height="9" fill="#43a849"/><circle cx="6.5" cy="9.9" r="1.2" fill="#fff"/><path d="M5.6 10 H7.4 L7 14 H6 Z" fill="#fff"/></svg><div class="t" style="left:351px;top:165px;font-size:12px;line-height:20px;color:#444444;">透明加密</div><div class="t" style="left:431px;top:165px;font-size:13px;line-height:20px;color:#444444;transform:scaleX(0.931);transform-origin:0 0;">WINWORD.EXE</div><div class="t" style="left:565px;top:165px;font-size:13px;line-height:20px;color:#444444;transform:scaleX(0.986);transform-origin:0 0;">C:\Program Files (x86)\Ping32\Console\data\Approval\Decrypt\70732BE7-8FF3-4EFC-84D0-0451F12D...</div><div class="t" style="left:1181px;top:165px;font-size:13px;line-height:20px;color:#444444;transform:scaleX(1.04);transform-origin:0 0;">docx</div><div class="t" style="left:1251px;top:165px;font-size:13px;line-height:20px;color:#444444;transform:scaleX(0.956);transform-origin:0 0;">8.2KB</div><div class="t" style="left:1321px;top:165px;font-size:13px;line-height:20px;color:#444444;transform:scaleX(0.979);transform-origin:0 0;">2025-10-28 09:10:24</div><div class="r" style="left:0px;top:189px;width:1446px;height:27px;background:#f9f9f9;"></div><div class="t" style="left:3px;top:192px;font-size:13px;line-height:20px;color:#444444;"><span style="letter-spacing:-1.3px">WJJ</span>策略</div><div class="t" style="left:91px;top:192px;font-size:13px;line-height:20px;color:#444444;transform:scaleX(0.921);transform-origin:0 0;">DESKTOP-K85IEOF</div><div class="t" style="left:231px;top:192px;font-size:13px;line-height:20px;color:#444444;transform:scaleX(0.951);transform-origin:0 0;">192.168.1.195</div><svg class="r" style="left:332px;top:194px" width="13" height="16" viewBox="0 0 13 16"><path d="M1.9 7.5 V5 A4.6 4.6 0 0 1 11.1 5 V7.5" fill="none" stroke="#43a849" stroke-width="1.8"/><rect x="0" y="7" width="13" height="9" fill="#43a849"/><circle cx="6.5" cy="9.9" r="1.2" fill="#fff"/><path d="M5.6 10 H7.4 L7 14 H6 Z" fill="#fff"/></svg><div class="t" style="left:351px;top:192px;font-size:12px;line-height:20px;color:#444444;">透明加密</div><div class="t" style="left:431px;top:192px;font-size:13px;line-height:20px;color:#444444;transform:scaleX(0.931);transform-origin:0 0;">WINWORD.EXE</div><div class="t" style="left:565px;top:192px;font-size:13px;line-height:20px;color:#444444;transform:scaleX(1.037);transform-origin:0 0;">C:\Users\NSecsoft-Demo\AppData\Roaming\Microsoft\Templates\~$Normal.dotm</div><div class="t" style="left:1181px;top:192px;font-size:13px;line-height:20px;color:#444444;">dotm</div><div class="t" style="left:1251px;top:192px;font-size:13px;line-height:20px;color:#444444;transform:scaleX(0.956);transform-origin:0 0;">8.2KB</div><div class="t" style="left:1321px;top:192px;font-size:13px;line-height:20px;color:#444444;transform:scaleX(0.979);transform-origin:0 0;">2025-10-28 09:10:23</div><div class="r" style="left:0px;top:216px;width:1446px;height:27px;background:#ffffff;"></div><div class="t" style="left:3px;top:219px;font-size:13px;line-height:20px;color:#444444;"><span style="letter-spacing:-1.3px">WJJ</span>策略</div><div class="t" style="left:91px;top:219px;font-size:13px;line-height:20px;color:#444444;transform:scaleX(0.921);transform-origin:0 0;">DESKTOP-K85IEOF</div><div class="t" style="left:231px;top:219px;font-size:13px;line-height:20px;color:#444444;transform:scaleX(0.951);transform-origin:0 0;">192.168.1.195</div><svg class="r" style="left:332px;top:221px" width="13" height="16" viewBox="0 0 13 16"><path d="M1.9 7.5 V5 A4.6 4.6 0 0 1 11.1 5 V7.5" fill="none" stroke="#43a849" stroke-width="1.8"/><rect x="0" y="7" width="13" height="9" fill="#43a849"/><circle cx="6.5" cy="9.9" r="1.2" fill="#fff"/><path d="M5.6 10 H7.4 L7 14 H6 Z" fill="#fff"/></svg><div class="t" style="left:351px;top:219px;font-size:12px;line-height:20px;color:#444444;">透明加密</div><div class="t" style="left:431px;top:219px;font-size:13px;line-height:20px;color:#444444;transform:scaleX(0.931);transform-origin:0 0;">WINWORD.EXE</div><div class="t" style="left:565px;top:219px;font-size:13px;line-height:20px;color:#444444;transform:scaleX(1.025);transform-origin:0 0;">C:\Users\NSecsoft-Demo\Desktop\~$stsffa.docx</div><div class="t" style="left:1181px;top:219px;font-size:13px;line-height:20px;color:#444444;transform:scaleX(1.04);transform-origin:0 0;">docx</div><div class="t" style="left:1251px;top:219px;font-size:13px;line-height:20px;color:#444444;transform:scaleX(0.956);transform-origin:0 0;">8.2KB</div><div class="t" style="left:1321px;top:219px;font-size:13px;line-height:20px;color:#444444;transform:scaleX(0.979);transform-origin:0 0;">2025-10-28 09:09:17</div><div class="r" style="left:0px;top:243px;width:1446px;height:27px;background:#f9f9f9;"></div><div class="t" style="left:3px;top:246px;font-size:13px;line-height:20px;color:#444444;"><span style="letter-spacing:-1.3px">WJJ</span>策略</div><div class="t" style="left:91px;top:246px;font-size:13px;line-height:20px;color:#444444;transform:scaleX(0.921);transform-origin:0 0;">DESKTOP-K85IEOF</div><div class="t" style="left:231px;top:246px;font-size:13px;line-height:20px;color:#444444;transform:scaleX(0.951);transform-origin:0 0;">192.168.1.195</div><svg class="r" style="left:332px;top:248px" width="13" height="16" viewBox="0 0 13 16"><path d="M1.9 7.5 V5 A4.6 4.6 0 0 1 11.1 5 V7.5" fill="none" stroke="#43a849" stroke-width="1.8"/><rect x="0" y="7" width="13" height="9" fill="#43a849"/><circle cx="6.5" cy="9.9" r="1.2" fill="#fff"/><path d="M5.6 10 H7.4 L7 14 H6 Z" fill="#fff"/></svg><div class="t" style="left:351px;top:246px;font-size:12px;line-height:20px;color:#444444;">透明加密</div><div class="t" style="left:431px;top:246px;font-size:13px;line-height:20px;color:#444444;transform:scaleX(0.931);transform-origin:0 0;">WINWORD.EXE</div><div class="t" style="left:565px;top:246px;font-size:13px;line-height:20px;color:#444444;transform:scaleX(1.023);transform-origin:0 0;">C:\Users\NSecsoft-Demo\Desktop\tstsffa.docx</div><div class="t" style="left:1181px;top:246px;font-size:13px;line-height:20px;color:#444444;transform:scaleX(1.04);transform-origin:0 0;">docx</div><div class="t" style="left:1251px;top:246px;font-size:13px;line-height:20px;color:#444444;transform:scaleX(0.956);transform-origin:0 0;">8.2KB</div><div class="t" style="left:1321px;top:246px;font-size:13px;line-height:20px;color:#444444;transform:scaleX(0.979);transform-origin:0 0;">2025-10-28 09:09:17</div><div class="r" style="left:0px;top:270px;width:1446px;height:27px;background:#ffffff;"></div><div class="t" style="left:3px;top:273px;font-size:13px;line-height:20px;color:#444444;"><span style="letter-spacing:-1.3px">WJJ</span>策略</div><div class="t" style="left:91px;top:273px;font-size:13px;line-height:20px;color:#444444;transform:scaleX(0.921);transform-origin:0 0;">DESKTOP-K85IEOF</div><div class="t" style="left:231px;top:273px;font-size:13px;line-height:20px;color:#444444;transform:scaleX(0.951);transform-origin:0 0;">192.168.1.195</div><svg class="r" style="left:332px;top:275px" width="13" height="16" viewBox="0 0 13 16"><path d="M1.9 7.5 V5 A4.6 4.6 0 0 1 11.1 5 V7.5" fill="none" stroke="#43a849" stroke-width="1.8"/><rect x="0" y="7" width="13" height="9" fill="#43a849"/><circle cx="6.5" cy="9.9" r="1.2" fill="#fff"/><path d="M5.6 10 H7.4 L7 14 H6 Z" fill="#fff"/></svg><div class="t" style="left:351px;top:273px;font-size:12px;line-height:20px;color:#444444;">透明加密</div><div class="t" style="left:431px;top:273px;font-size:13px;line-height:20px;color:#444444;transform:scaleX(0.931);transform-origin:0 0;">WINWORD.EXE</div><div class="t" style="left:565px;top:273px;font-size:13px;line-height:20px;color:#444444;transform:scaleX(1.037);transform-origin:0 0;">C:\Users\NSecsoft-Demo\AppData\Roaming\Microsoft\Templates\~$Normal.dotm</div><div class="t" style="left:1181px;top:273px;font-size:13px;line-height:20px;color:#444444;">dotm</div><div class="t" style="left:1251px;top:273px;font-size:13px;line-height:20px;color:#444444;transform:scaleX(0.956);transform-origin:0 0;">8.2KB</div><div class="t" style="left:1321px;top:273px;font-size:13px;line-height:20px;color:#444444;transform:scaleX(0.979);transform-origin:0 0;">2025-10-28 09:09:16</div><div class="r" style="left:0px;top:297px;width:1446px;height:27px;background:#f9f9f9;"></div><div class="t" style="left:3px;top:300px;font-size:13px;line-height:20px;color:#444444;transform:scaleX(0.955);transform-origin:0 0;">XuJin</div><div class="t" style="left:91px;top:300px;font-size:13px;line-height:20px;color:#444444;transform:scaleX(0.974);transform-origin:0 0;">JasonTest</div><div class="t" style="left:231px;top:300px;font-size:13px;line-height:20px;color:#444444;transform:scaleX(0.96);transform-origin:0 0;">192.168.91.140</div><svg class="r" style="left:332px;top:302px" width="13" height="16" viewBox="0 0 13 16"><path d="M2.8 2.56 A4.6 4.6 0 0 1 11.3 5 V7.5" fill="none" stroke="#ffb400" stroke-width="1.8"/><rect x="0" y="7" width="13" height="9" fill="#ffb400"/><circle cx="6.5" cy="9.9" r="1.2" fill="#fff"/><path d="M5.6 10 H7.4 L7 14 H6 Z" fill="#fff"/></svg><div class="t" style="left:351px;top:300px;font-size:12px;line-height:20px;color:#444444;">透明解密</div><div class="t" style="left:431px;top:300px;font-size:13px;line-height:20px;color:#444444;transform:scaleX(1.025);transform-origin:0 0;">notepad.exe</div><div class="t" style="left:565px;top:300px;font-size:13px;line-height:20px;color:#444444;transform:scaleX(1.026);transform-origin:0 0;">C:\Users\Test\Desktop\Test.txt</div><div class="t" style="left:1181px;top:300px;font-size:13px;line-height:20px;color:#444444;">txt</div><div class="t" style="left:1251px;top:300px;font-size:13px;line-height:20px;color:#444444;transform:scaleX(0.956);transform-origin:0 0;">8.2KB</div><div class="t" style="left:1321px;top:300px;font-size:13px;line-height:20px;color:#444444;transform:scaleX(0.979);transform-origin:0 0;">2025-10-27 16:23:18</div><div class="r" style="left:0px;top:324px;width:1446px;height:27px;background:#ffffff;"></div><div class="t" style="left:3px;top:327px;font-size:13px;line-height:20px;color:#444444;transform:scaleX(0.955);transform-origin:0 0;">XuJin</div><div class="t" style="left:91px;top:327px;font-size:13px;line-height:20px;color:#444444;transform:scaleX(0.974);transform-origin:0 0;">JasonTest</div><div class="t" style="left:231px;top:327px;font-size:13px;line-height:20px;color:#444444;transform:scaleX(0.96);transform-origin:0 0;">192.168.91.140</div><svg class="r" style="left:332px;top:329px" width="13" height="16" viewBox="0 0 13 16"><path d="M2.8 2.56 A4.6 4.6 0 0 1 11.3 5 V7.5" fill="none" stroke="#ffb400" stroke-width="1.8"/><rect x="0" y="7" width="13" height="9" fill="#ffb400"/><circle cx="6.5" cy="9.9" r="1.2" fill="#fff"/><path d="M5.6 10 H7.4 L7 14 H6 Z" fill="#fff"/></svg><div class="t" style="left:351px;top:327px;font-size:12px;line-height:20px;color:#444444;">透明解密</div><div class="t" style="left:431px;top:327px;font-size:13px;line-height:20px;color:#444444;transform:scaleX(1.016);transform-origin:0 0;">Nutstore.WindowsH...</div><div class="t" style="left:565px;top:327px;font-size:13px;line-height:20px;color:#444444;transform:scaleX(1.003);transform-origin:0 0;">C:\NSEC\Debug\Log\Nutstore.WindowsHook.exe-user_2025-10-27.log</div><div class="t" style="left:1181px;top:327px;font-size:13px;line-height:20px;color:#444444;">log</div><div class="t" style="left:1251px;top:327px;font-size:13px;line-height:20px;color:#444444;transform:scaleX(0.956);transform-origin:0 0;">8.2KB</div><div class="t" style="left:1321px;top:327px;font-size:13px;line-height:20px;color:#444444;transform:scaleX(0.979);transform-origin:0 0;">2025-10-27 16:14:41</div><div class="r" style="left:0px;top:351px;width:1446px;height:27px;background:#f9f9f9;"></div><div class="t" style="left:3px;top:354px;font-size:13px;line-height:20px;color:#444444;transform:scaleX(0.955);transform-origin:0 0;">XuJin</div><div class="t" style="left:91px;top:354px;font-size:13px;line-height:20px;color:#444444;transform:scaleX(0.974);transform-origin:0 0;">JasonTest</div><div class="t" style="left:231px;top:354px;font-size:13px;line-height:20px;color:#444444;transform:scaleX(0.96);transform-origin:0 0;">192.168.91.140</div><svg class="r" style="left:332px;top:356px" width="13" height="16" viewBox="0 0 13 16"><path d="M2.8 2.56 A4.6 4.6 0 0 1 11.3 5 V7.5" fill="none" stroke="#ffb400" stroke-width="1.8"/><rect x="0" y="7" width="13" height="9" fill="#ffb400"/><circle cx="6.5" cy="9.9" r="1.2" fill="#fff"/><path d="M5.6 10 H7.4 L7 14 H6 Z" fill="#fff"/></svg><div class="t" style="left:351px;top:354px;font-size:12px;line-height:20px;color:#444444;">透明解密</div><div class="t" style="left:431px;top:354px;font-size:13px;line-height:20px;color:#444444;transform:scaleX(1.003);transform-origin:0 0;">NutstoreClient.exe</div><div class="t" style="left:565px;top:354px;font-size:13px;line-height:20px;color:#444444;transform:scaleX(0.998);transform-origin:0 0;">C:\NSEC\Debug\Log\NutstoreClient.exe-user_2025-10-27.log</div><div class="t" style="left:1181px;top:354px;font-size:13px;line-height:20px;color:#444444;">log</div><div class="t" style="left:1251px;top:354px;font-size:13px;line-height:20px;color:#444444;transform:scaleX(0.956);transform-origin:0 0;">8.2KB</div><div class="t" style="left:1321px;top:354px;font-size:13px;line-height:20px;color:#444444;transform:scaleX(0.979);transform-origin:0 0;">2025-10-27 16:14:36</div><div class="r" style="left:0px;top:378px;width:1446px;height:27px;background:#ffffff;"></div><div class="t" style="left:3px;top:381px;font-size:13px;line-height:20px;color:#444444;transform:scaleX(0.955);transform-origin:0 0;">XuJin</div><div class="t" style="left:91px;top:381px;font-size:13px;line-height:20px;color:#444444;transform:scaleX(0.974);transform-origin:0 0;">JasonTest</div><div class="t" style="left:231px;top:381px;font-size:13px;line-height:20px;color:#444444;transform:scaleX(0.96);transform-origin:0 0;">192.168.91.140</div><svg class="r" style="left:332px;top:383px" width="13" height="16" viewBox="0 0 13 16"><path d="M2.8 2.56 A4.6 4.6 0 0 1 11.3 5 V7.5" fill="none" stroke="#ffb400" stroke-width="1.8"/><rect x="0" y="7" width="13" height="9" fill="#ffb400"/><circle cx="6.5" cy="9.9" r="1.2" fill="#fff"/><path d="M5.6 10 H7.4 L7 14 H6 Z" fill="#fff"/></svg><div class="t" style="left:351px;top:381px;font-size:12px;line-height:20px;color:#444444;">透明解密</div><div class="t" style="left:431px;top:381px;font-size:13px;line-height:20px;color:#444444;transform:scaleX(1.019);transform-origin:0 0;">Nutstore.exe</div><div class="t" style="left:565px;top:381px;font-size:13px;line-height:20px;color:#444444;">C:\NSEC\Debug\Log\Nutstore.exe-user_2025-10-27.log</div><div class="t" style="left:1181px;top:381px;font-size:13px;line-height:20px;color:#444444;">log</div><div class="t" style="left:1251px;top:381px;font-size:13px;line-height:20px;color:#444444;transform:scaleX(0.956);transform-origin:0 0;">8.2KB</div><div class="t" style="left:1321px;top:381px;font-size:13px;line-height:20px;color:#444444;transform:scaleX(0.979);transform-origin:0 0;">2025-10-27 16:14:36</div><div class="r" style="left:0px;top:405px;width:1446px;height:27px;background:#f9f9f9;"></div><div class="t" style="left:3px;top:408px;font-size:13px;line-height:20px;color:#444444;transform:scaleX(0.955);transform-origin:0 0;">XuJin</div><div class="t" style="left:91px;top:408px;font-size:13px;line-height:20px;color:#444444;transform:scaleX(0.974);transform-origin:0 0;">JasonTest</div><div class="t" style="left:231px;top:408px;font-size:13px;line-height:20px;color:#444444;transform:scaleX(0.96);transform-origin:0 0;">192.168.91.140</div><svg class="r" style="left:332px;top:410px" width="13" height="16" viewBox="0 0 13 16"><path d="M1.9 7.5 V5 A4.6 4.6 0 0 1 11.1 5 V7.5" fill="none" stroke="#43a849" stroke-width="1.8"/><rect x="0" y="7" width="13" height="9" fill="#43a849"/><circle cx="6.5" cy="9.9" r="1.2" fill="#fff"/><path d="M5.6 10 H7.4 L7 14 H6 Z" fill="#fff"/></svg><div class="t" style="left:351px;top:408px;font-size:12px;line-height:20px;color:#444444;">透明加密</div><div class="t" style="left:431px;top:408px;font-size:13px;line-height:20px;color:#444444;transform:scaleX(1.003);transform-origin:0 0;">NutstoreClient.exe</div><div class="t" style="left:565px;top:408px;font-size:13px;line-height:20px;color:#444444;transform:scaleX(0.987);transform-origin:0 0;">C:\Users\Test\AppData\Local\Shanghai_YiJing_Network_L\NutstoreClient.exe_Url_wxrir2hnecd5fvd4jr...</div><div class="t" style="left:1181px;top:408px;font-size:13px;line-height:20px;color:#444444;">newcfg</div><div class="t" style="left:1251px;top:408px;font-size:13px;line-height:20px;color:#444444;transform:scaleX(0.956);transform-origin:0 0;">8.2KB</div><div class="t" style="left:1321px;top:408px;font-size:13px;line-height:20px;color:#444444;transform:scaleX(0.979);transform-origin:0 0;">2025-10-27 14:24:47</div><div class="r" style="left:0px;top:432px;width:1446px;height:27px;background:#ffffff;"></div><div class="t" style="left:3px;top:435px;font-size:13px;line-height:20px;color:#444444;transform:scaleX(0.955);transform-origin:0 0;">XuJin</div><div class="t" style="left:91px;top:435px;font-size:13px;line-height:20px;color:#444444;transform:scaleX(0.974);transform-origin:0 0;">JasonTest</div><div class="t" style="left:231px;top:435px;font-size:13px;line-height:20px;color:#444444;transform:scaleX(0.96);transform-origin:0 0;">192.168.91.140</div><svg class="r" style="left:332px;top:437px" width="13" height="16" viewBox="0 0 13 16"><path d="M2.8 2.56 A4.6 4.6 0 0 1 11.3 5 V7.5" fill="none" stroke="#ffb400" stroke-width="1.8"/><rect x="0" y="7" width="13" height="9" fill="#ffb400"/><circle cx="6.5" cy="9.9" r="1.2" fill="#fff"/><path d="M5.6 10 H7.4 L7 14 H6 Z" fill="#fff"/></svg><div class="t" style="left:351px;top:435px;font-size:12px;line-height:20px;color:#444444;">透明解密</div><div class="t" style="left:431px;top:435px;font-size:13px;line-height:20px;color:#444444;transform:scaleX(1.003);transform-origin:0 0;">NutstoreClient.exe</div><div class="t" style="left:565px;top:435px;font-size:13px;line-height:20px;color:#444444;transform:scaleX(0.987);transform-origin:0 0;">C:\Users\Test\AppData\Local\Shanghai_YiJing_Network_L\NutstoreClient.exe_Url_wxrir2hnecd5fvd4jr...</div><div class="t" style="left:1181px;top:435px;font-size:13px;line-height:20px;color:#444444;">config</div><div class="t" style="left:1251px;top:435px;font-size:13px;line-height:20px;color:#444444;transform:scaleX(0.956);transform-origin:0 0;">9KB</div><div class="t" style="left:1321px;top:435px;font-size:13px;line-height:20px;color:#444444;transform:scaleX(0.979);transform-origin:0 0;">2025-10-27 14:24:47</div><div class="r" style="left:0px;top:459px;width:1446px;height:27px;background:#f9f9f9;"></div><div class="t" style="left:3px;top:462px;font-size:13px;line-height:20px;color:#444444;transform:scaleX(0.955);transform-origin:0 0;">XuJin</div><div class="t" style="left:91px;top:462px;font-size:13px;line-height:20px;color:#444444;transform:scaleX(0.974);transform-origin:0 0;">JasonTest</div><div class="t" style="left:231px;top:462px;font-size:13px;line-height:20px;color:#444444;transform:scaleX(0.96);transform-origin:0 0;">192.168.91.140</div><svg class="r" style="left:332px;top:464px" width="13" height="16" viewBox="0 0 13 16"><path d="M2.8 2.56 A4.6 4.6 0 0 1 11.3 5 V7.5" fill="none" stroke="#ffb400" stroke-width="1.8"/><rect x="0" y="7" width="13" height="9" fill="#ffb400"/><circle cx="6.5" cy="9.9" r="1.2" fill="#fff"/><path d="M5.6 10 H7.4 L7 14 H6 Z" fill="#fff"/></svg><div class="t" style="left:351px;top:462px;font-size:12px;line-height:20px;color:#444444;">透明解密</div><div class="t" style="left:431px;top:462px;font-size:13px;line-height:20px;color:#444444;transform:scaleX(1.003);transform-origin:0 0;">NutstoreClient.exe</div><div class="t" style="left:565px;top:462px;font-size:13px;line-height:20px;color:#444444;transform:scaleX(0.961);transform-origin:0 0;">E:\我的坚果云\Test\新建文本文档.txt</div><div class="t" style="left:1181px;top:462px;font-size:13px;line-height:20px;color:#444444;">txt</div><div class="t" style="left:1251px;top:462px;font-size:13px;line-height:20px;color:#444444;transform:scaleX(0.956);transform-origin:0 0;">8.2KB</div><div class="t" style="left:1321px;top:462px;font-size:13px;line-height:20px;color:#444444;transform:scaleX(0.979);transform-origin:0 0;">2025-10-27 14:24:46</div><div class="r" style="left:0px;top:486px;width:1446px;height:27px;background:#ffffff;"></div><div class="t" style="left:3px;top:489px;font-size:13px;line-height:20px;color:#444444;transform:scaleX(0.955);transform-origin:0 0;">XuJin</div><div class="t" style="left:91px;top:489px;font-size:13px;line-height:20px;color:#444444;transform:scaleX(0.974);transform-origin:0 0;">JasonTest</div><div class="t" style="left:231px;top:489px;font-size:13px;line-height:20px;color:#444444;transform:scaleX(0.96);transform-origin:0 0;">192.168.91.140</div><svg class="r" style="left:332px;top:491px" width="13" height="16" viewBox="0 0 13 16"><path d="M1.9 7.5 V5 A4.6 4.6 0 0 1 11.1 5 V7.5" fill="none" stroke="#43a849" stroke-width="1.8"/><rect x="0" y="7" width="13" height="9" fill="#43a849"/><circle cx="6.5" cy="9.9" r="1.2" fill="#fff"/><path d="M5.6 10 H7.4 L7 14 H6 Z" fill="#fff"/></svg><div class="t" style="left:351px;top:489px;font-size:12px;line-height:20px;color:#444444;">透明加密</div><div class="t" style="left:431px;top:489px;font-size:13px;line-height:20px;color:#444444;transform:scaleX(1.011);transform-origin:0 0;">Nutstore.COMLocal...</div><div class="t" style="left:565px;top:489px;font-size:13px;line-height:20px;color:#444444;transform:scaleX(0.994);transform-origin:0 0;">C:\NSEC\Debug\Log\Nutstore.COMLocalServer.exe-user_2025-10-27.log</div><div class="t" style="left:1181px;top:489px;font-size:13px;line-height:20px;color:#444444;">log</div><div class="t" style="left:1251px;top:489px;font-size:13px;line-height:20px;color:#444444;transform:scaleX(0.956);transform-origin:0 0;">8.2KB</div><div class="t" style="left:1321px;top:489px;font-size:13px;line-height:20px;color:#444444;transform:scaleX(0.979);transform-origin:0 0;">2025-10-27 14:24:40</div><div class="r" style="left:0px;top:513px;width:1446px;height:27px;background:#f9f9f9;"></div><div class="t" style="left:3px;top:516px;font-size:13px;line-height:20px;color:#444444;transform:scaleX(0.978);transform-origin:0 0;">Cheng</div><div class="t" style="left:91px;top:516px;font-size:13px;line-height:20px;color:#444444;transform:scaleX(0.978);transform-origin:0 0;">Cheng</div><div class="t" style="left:231px;top:516px;font-size:13px;line-height:20px;color:#444444;transform:scaleX(0.963);transform-origin:0 0;">192.168.69.69</div><svg class="r" style="left:332px;top:518px" width="13" height="16" viewBox="0 0 13 16"><path d="M1.9 7.5 V5 A4.6 4.6 0 0 1 11.1 5 V7.5" fill="none" stroke="#43a849" stroke-width="1.8"/><rect x="0" y="7" width="13" height="9" fill="#43a849"/><circle cx="6.5" cy="9.9" r="1.2" fill="#fff"/><path d="M5.6 10 H7.4 L7 14 H6 Z" fill="#fff"/></svg><div class="t" style="left:351px;top:516px;font-size:12px;line-height:20px;color:#444444;">透明加密</div><div class="t" style="left:431px;top:516px;font-size:13px;line-height:20px;color:#444444;transform:scaleX(1.003);transform-origin:0 0;">NutstoreClient.exe</div><div class="t" style="left:565px;top:516px;font-size:13px;line-height:20px;color:#444444;transform:scaleX(0.998);transform-origin:0 0;">C:\NSEC\Debug\Log\NutstoreClient.exe-user_2025-10-27.log</div><div class="t" style="left:1181px;top:516px;font-size:13px;line-height:20px;color:#444444;">log</div><div class="t" style="left:1251px;top:516px;font-size:13px;line-height:20px;color:#444444;">-</div><div class="t" style="left:1321px;top:516px;font-size:13px;line-height:20px;color:#444444;transform:scaleX(0.979);transform-origin:0 0;">2025-10-27 13:21:16</div><div class="r" style="left:0px;top:540px;width:1446px;height:27px;background:#ffffff;"></div><div class="t" style="left:3px;top:543px;font-size:13px;line-height:20px;color:#444444;transform:scaleX(0.978);transform-origin:0 0;">Cheng</div><div class="t" style="left:91px;top:543px;font-size:13px;line-height:20px;color:#444444;transform:scaleX(0.978);transform-origin:0 0;">Cheng</div><div class="t" style="left:231px;top:543px;font-size:13px;line-height:20px;color:#444444;transform:scaleX(0.963);transform-origin:0 0;">192.168.69.69</div><svg class="r" style="left:332px;top:545px" width="13" height="16" viewBox="0 0 13 16"><path d="M1.9 7.5 V5 A4.6 4.6 0 0 1 11.1 5 V7.5" fill="none" stroke="#43a849" stroke-width="1.8"/><rect x="0" y="7" width="13" height="9" fill="#43a849"/><circle cx="6.5" cy="9.9" r="1.2" fill="#fff"/><path d="M5.6 10 H7.4 L7 14 H6 Z" fill="#fff"/></svg><div class="t" style="left:351px;top:543px;font-size:12px;line-height:20px;color:#444444;">透明加密</div><div class="t" style="left:431px;top:543px;font-size:13px;line-height:20px;color:#444444;transform:scaleX(1.019);transform-origin:0 0;">Nutstore.exe</div><div class="t" style="left:565px;top:543px;font-size:13px;line-height:20px;color:#444444;">C:\NSEC\Debug\Log\Nutstore.exe-user_2025-10-27.log</div><div class="t" style="left:1181px;top:543px;font-size:13px;line-height:20px;color:#444444;">log</div><div class="t" style="left:1251px;top:543px;font-size:13px;line-height:20px;color:#444444;">-</div><div class="t" style="left:1321px;top:543px;font-size:13px;line-height:20px;color:#444444;transform:scaleX(0.979);transform-origin:0 0;">2025-10-27 13:21:14</div><div class="r" style="left:0px;top:567px;width:1446px;height:27px;background:#f9f9f9;"></div><div class="t" style="left:3px;top:570px;font-size:13px;line-height:20px;color:#444444;transform:scaleX(0.955);transform-origin:0 0;">XuJin</div><div class="t" style="left:91px;top:570px;font-size:13px;line-height:20px;color:#444444;transform:scaleX(0.974);transform-origin:0 0;">JasonTest</div><div class="t" style="left:231px;top:570px;font-size:13px;line-height:20px;color:#444444;transform:scaleX(0.96);transform-origin:0 0;">192.168.91.140</div><svg class="r" style="left:332px;top:572px" width="13" height="16" viewBox="0 0 13 16"><path d="M1.9 7.5 V5 A4.6 4.6 0 0 1 11.1 5 V7.5" fill="none" stroke="#43a849" stroke-width="1.8"/><rect x="0" y="7" width="13" height="9" fill="#43a849"/><circle cx="6.5" cy="9.9" r="1.2" fill="#fff"/><path d="M5.6 10 H7.4 L7 14 H6 Z" fill="#fff"/></svg><div class="t" style="left:351px;top:570px;font-size:12px;line-height:20px;color:#444444;">透明加密</div><div class="t" style="left:431px;top:570px;font-size:13px;line-height:20px;color:#444444;transform:scaleX(1.016);transform-origin:0 0;">Nutstore.WindowsH...</div><div class="t" style="left:565px;top:570px;font-size:13px;line-height:20px;color:#444444;transform:scaleX(1.003);transform-origin:0 0;">C:\NSEC\Debug\Log\Nutstore.WindowsHook.exe-user_2025-10-27.log</div><div class="t" style="left:1181px;top:570px;font-size:13px;line-height:20px;color:#444444;">log</div><div class="t" style="left:1251px;top:570px;font-size:13px;line-height:20px;color:#444444;transform:scaleX(0.956);transform-origin:0 0;">8.2KB</div><div class="t" style="left:1321px;top:570px;font-size:13px;line-height:20px;color:#444444;transform:scaleX(0.979);transform-origin:0 0;">2025-10-27 12:55:45</div></div><div class="r" style="left:0px;top:852px;width:1446px;height:21px;background:#ffffff;"></div><svg class="r" style="left:2px;top:859px" width="11" height="6" viewBox="0 0 11 6"><rect x="0" y="0" width="1.1" height="6" fill="#a6a6a6"/><path d="M6 0 L2.2 3 L6 6Z M10 0 L6.2 3 L10 6Z" fill="#a6a6a6"/></svg><svg class="r" style="left:18px;top:859px" width="9" height="6" viewBox="0 0 9 6"><path d="M4.3 0 L0.5 3 L4.3 6Z M8.3 0 L4.5 3 L8.3 6Z" fill="#a6a6a6"/></svg><svg class="r" style="left:36px;top:859px" width="5" height="6" viewBox="0 0 5 6"><path d="M4 0 L0.5 3 L4 6Z" fill="#a6a6a6"/></svg><div class="t" style="left:55px;top:852px;font-size:12px;line-height:20px;color:#444;">记录<span style="font-size:13px"> 1 of 46</span></div><svg class="r" style="left:139px;top:859px" width="5" height="6" viewBox="0 0 5 6"><path d="M0.5 0 L4 3 L0.5 6Z" fill="#a6a6a6"/></svg><svg class="r" style="left:152px;top:859px" width="9" height="6" viewBox="0 0 9 6"><path d="M0.5 0 L4.3 3 L0.5 6Z M4.5 0 L8.3 3 L4.5 6Z" fill="#a6a6a6"/></svg><svg class="r" style="left:166px;top:859px" width="11" height="6" viewBox="0 0 11 6"><path d="M0.5 0 L4.3 3 L0.5 6Z M4.5 0 L8.3 3 L4.5 6Z" fill="#a6a6a6"/><rect x="9" y="0" width="1.1" height="6" fill="#a6a6a6"/></svg><div class="r" style="left:0px;top:873px;width:1446px;height:24px;background:#0f6cbd;"></div><div class="t" style="left:7px;top:876px;font-size:12px;line-height:20px;color:#ffffff;">就绪</div><svg class="r" style="left:1245px;top:876px" width="14" height="17" viewBox="0 0 14 17"><path d="M7 0.5 V11 M1.5 6 L7 11.5 L12.5 6" fill="none" stroke="#5cae7c" stroke-width="2.3"/><rect x="0.5" y="14.5" width="13" height="2.2" fill="#5cae7c"/></svg><div class="t" style="left:1265px;top:876px;font-size:12px;line-height:20px;color:#ffffff;">任务中心</div><svg class="r" style="left:1329px;top:879px" width="16" height="12" viewBox="0 0 16 12"><rect x="0.5" y="0.5" width="15" height="11" fill="#fff" stroke="#5a5a5a" stroke-width="1"/><rect x="3" y="6" width="7.5" height="1.1" fill="#0f6cbd"/><rect x="3" y="8.2" width="7.5" height="1" fill="#0f6cbd"/><rect x="11" y="2" width="2.6" height="2.6" fill="#0f6cbd"/></svg><div class="t" style="left:1350px;top:876px;font-size:12px;line-height:20px;color:#ffffff;">8728条未读信息</div>
</body></html>
